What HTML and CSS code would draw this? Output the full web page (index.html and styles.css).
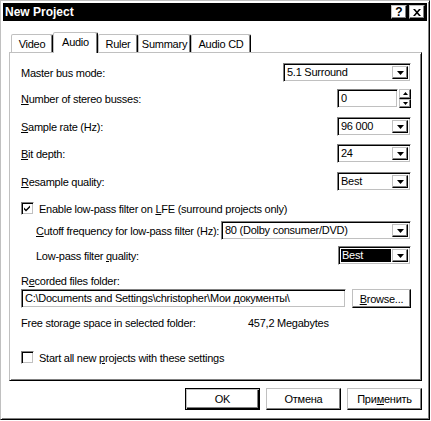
FILE: index.html
```html
<!DOCTYPE html>
<html>
<head>
<meta charset="utf-8">
<link rel="stylesheet" href="styles.css">
</head>
<body>
<div class="window">
  <div class="titlebar">
    <span class="title">New Project</span>
    <div class="tbtns">
      <span class="tbtn">?</span>
      <span class="tbtn"><svg width="8" height="7" viewBox="0 0 8 7"><path d="M0 0h2l2 2.2L6 0h2L5 3.5 8 7H6L4 4.8 2 7H0l3-3.5z" fill="#000"/></svg></span>
    </div>
  </div>
  <div class="client">
    <div class="tabs">
      <div class="tab t-video">Video</div>
      <div class="tab active t-audio">Audio</div>
      <div class="tab t-ruler">Ruler</div>
      <div class="tab t-summary">Summary</div>
      <div class="tab t-cd">Audio CD</div>
    </div>
    <div class="panel">
      <div class="row mt0">
        <span class="lbl">Master bus mode:</span>
        <div class="combo w-master"><span class="val">5.1 Surround</span><span class="drop"><svg width="7" height="4" viewBox="0 0 7 4"><path d="M0 0h7L3.5 4z" fill="#000"/></svg></span></div>
      </div>
      <div class="row mt7">
        <span class="lbl"><u>N</u>umber of stereo busses:</span>
        <div class="spin">
          <div class="edit"><span class="val">0</span></div>
          <div class="updown">
            <span class="ud"><svg width="5" height="3" viewBox="0 0 5 3"><path d="M0 3h5L2.5 0z" fill="#000"/></svg></span>
            <span class="ud"><svg width="5" height="3" viewBox="0 0 5 3"><path d="M0 0h5L2.5 3z" fill="#000"/></svg></span>
          </div>
        </div>
      </div>
      <div class="row mt9">
        <span class="lbl"><u>S</u>ample rate (Hz):</span>
        <div class="combo w-small"><span class="val">96 000</span><span class="drop"><svg width="7" height="4" viewBox="0 0 7 4"><path d="M0 0h7L3.5 4z" fill="#000"/></svg></span></div>
      </div>
      <div class="row mt8">
        <span class="lbl"><u>B</u>it depth:</span>
        <div class="combo w-small"><span class="val">24</span><span class="drop"><svg width="7" height="4" viewBox="0 0 7 4"><path d="M0 0h7L3.5 4z" fill="#000"/></svg></span></div>
      </div>
      <div class="row mt9">
        <span class="lbl"><u>R</u>esample quality:</span>
        <div class="combo w-small"><span class="val">Best</span><span class="drop"><svg width="7" height="4" viewBox="0 0 7 4"><path d="M0 0h7L3.5 4z" fill="#000"/></svg></span></div>
      </div>
      <div class="checkrow mt11">
        <span class="check"><svg width="9" height="9" viewBox="0 0 9 9"><path d="M1 3.5 3 5.5 7 1.5V3.5L3 7.5 1 5.5z" fill="#000"/></svg></span>
        <span class="lbl">Enable low-pass filter on <u>L</u>FE (surround projects only)</span>
      </div>
      <div class="row mt6">
        <span class="lbl ind grow"><u>C</u>utoff frequency for low-pass filter (Hz):</span>
        <div class="combo w-cutoff"><span class="val">80 (Dolby consumer/DVD)</span><span class="drop"><svg width="7" height="4" viewBox="0 0 7 4"><path d="M0 0h7L3.5 4z" fill="#000"/></svg></span></div>
      </div>
      <div class="row mt6">
        <span class="lbl ind">Low-pass filter <u>q</u>uality:</span>
        <div class="combo w-lp"><span class="val sel">Best</span><span class="drop"><svg width="7" height="4" viewBox="0 0 7 4"><path d="M0 0h7L3.5 4z" fill="#000"/></svg></span></div>
      </div>
      <div class="textrow mt10">R<u>e</u>corded files folder:</div>
      <div class="row mt1">
        <div class="edit w-path"><span class="val">C:\Documents and Settings\christopher\Мои документы\</span></div>
        <div class="pbtn w-browse"><u>B</u>rowse...</div>
      </div>
      <div class="textrow mt9 free">
        <span class="freelbl">Free storage space in selected folder:</span>
        <span>457,2 Megabytes</span>
      </div>
      <div class="checkrow mt21">
        <span class="check"></span>
        <span class="lbl">Start all new <u>p</u>rojects with these settings</span>
      </div>
    </div>
    <div class="buttons">
      <div class="pbtn dlg default">OK</div>
      <div class="pbtn dlg">Отмена</div>
      <div class="pbtn dlg">При<u>м</u>енить</div>
    </div>
  </div>
</div>
</body>
</html>
```
FILE: styles.css
```css
* { box-sizing: border-box; }
html, body { margin: 0; padding: 0; background: #fff; }
body {
  font-family: "Liberation Sans", Arial, sans-serif;
  font-size: 11px;
  letter-spacing: -0.25px;
  color: #000;
}
u { text-decoration: underline; text-underline-offset: 1px; }

.window {
  width: 430px;
  height: 420px;
  border: 1px solid;
  border-color: #c0c0c0 #000 #000 #c0c0c0;
  box-shadow: inset 1px 1px #fff, inset -1px -1px #808080;
  padding: 2px;
  display: flex;
  flex-direction: column;
}

.titlebar {
  height: 18px;
  background: #000;
  color: #fff;
  display: flex;
  align-items: center;
  padding: 0 2px 0 2px;
}
.title { font-weight: bold; font-size: 12px; letter-spacing: 0; flex: 1; }
.tbtns { display: flex; gap: 2px; }
.tbtn {
  width: 16px;
  height: 14px;
  background: #fff;
  border: 1px solid;
  border-color: #c0c0c0 #000 #000 #c0c0c0;
  box-shadow: inset -1px -1px #808080;
  display: flex;
  align-items: center;
  justify-content: center;
  font-weight: bold;
  font-size: 12px;
  letter-spacing: 0;
  color: #000;
  line-height: 12px;
}

.client { padding: 11px 6px 0 6px; display: flex; flex-direction: column; }

.tabs {
  display: flex;
  align-items: flex-end;
  height: 21px;
  padding-left: 2px;
  margin-bottom: -1px;
  position: relative;
  z-index: 1;
}
.tab {
  height: 18px;
  margin-bottom: 1px;
  border: 1px solid;
  border-bottom: none;
  border-color: #c0c0c0 #000 transparent #c0c0c0;
  box-shadow: inset -1px 0 #808080, inset 1px 1px #fff;
  border-radius: 2px 2px 0 0;
  background: #fff;
  display: flex;
  align-items: center;
  justify-content: center;
  padding-top: 1px;
}
.tab.active { height: 21px; margin-bottom: 0; padding-top: 0; padding-bottom: 2px; }
.t-video { width: 42px; }
.t-audio { width: 45px; }
.t-ruler { width: 40px; }
.t-summary { width: 53px; }
.t-cd { width: 60px; }

.panel {
  width: 413px;
  height: 329px;
  border: 1px solid;
  border-color: #c0c0c0 #000 #000 #c0c0c0;
  box-shadow: inset 1px 1px #fff, inset -1px -1px #808080;
  padding: 10px 10px 0 11px;
  display: flex;
  flex-direction: column;
}

.row { display: flex; align-items: center; justify-content: space-between; height: 19px; }
.checkrow { display: flex; align-items: center; gap: 5px; height: 13px; }
.textrow { height: 13px; line-height: 13px; display: flex; }
.lbl { white-space: nowrap; }
.ind { margin-left: 15px; }
.grow { flex: 1; min-width: 0; overflow: hidden; }
.freelbl { width: 227px; }

.mt0 { margin-top: 0; }
.mt1 { margin-top: 1px; }
.mt6 { margin-top: 6px; }
.mt7 { margin-top: 7px; }
.mt8 { margin-top: 8px; }
.mt9 { margin-top: 9px; }
.mt10 { margin-top: 10px; }
.mt11 { margin-top: 11px; }
.mt21 { margin-top: 21px; }

.combo, .edit {
  display: flex;
  height: 19px;
  border: 1px solid;
  border-color: #808080 #fff #fff #808080;
  box-shadow: inset 1px 1px #000, inset -1px -1px #c0c0c0;
  padding: 2px;
  flex: none;
}
.val {
  flex: 1;
  min-width: 0;
  padding-left: 1px;
  line-height: 13px;
  white-space: nowrap;
  overflow: hidden;
}
.val.sel { background: #000; color: #fff; margin-right: 1px; }
.drop {
  width: 16px;
  height: 13px;
  border: 1px solid;
  border-color: #c0c0c0 #000 #000 #c0c0c0;
  box-shadow: inset -1px -1px #808080;
  display: flex;
  align-items: center;
  justify-content: center;
}
.w-master { width: 128px; }
.w-small { width: 74px; }
.w-cutoff { width: 190px; }
.w-lp { width: 73px; }
.w-path { width: 325px; }

.spin { display: flex; gap: 1px; width: 74px; height: 19px; }
.spin .edit { flex: 1; }
.updown { width: 12px; display: flex; flex-direction: column; }
.ud {
  flex: 1;
  border: 1px solid;
  border-color: #c0c0c0 #000 #000 #c0c0c0;
  box-shadow: inset -1px -1px #808080;
  display: flex;
  align-items: center;
  justify-content: center;
}

.check {
  width: 13px;
  height: 13px;
  border: 1px solid;
  border-color: #808080 #fff #fff #808080;
  box-shadow: inset 1px 1px #000, inset -1px -1px #c0c0c0;
  display: flex;
  align-items: center;
  justify-content: center;
  flex: none;
}

.pbtn {
  display: flex;
  align-items: center;
  justify-content: center;
  border: 1px solid;
  border-color: #c0c0c0 #000 #000 #c0c0c0;
  box-shadow: inset -1px -1px #808080;
  white-space: nowrap;
}
.w-browse { width: 59px; height: 19px; }

.buttons {
  margin-top: 7px;
  display: flex;
  justify-content: flex-end;
  gap: 6px;
  width: 413px;
}
.dlg { width: 75px; height: 22px; }
.dlg.default {
  border-color: #000;
  box-shadow: inset 1px 1px #c0c0c0, inset -1px -1px #000, inset -2px -2px #808080;
}
```
